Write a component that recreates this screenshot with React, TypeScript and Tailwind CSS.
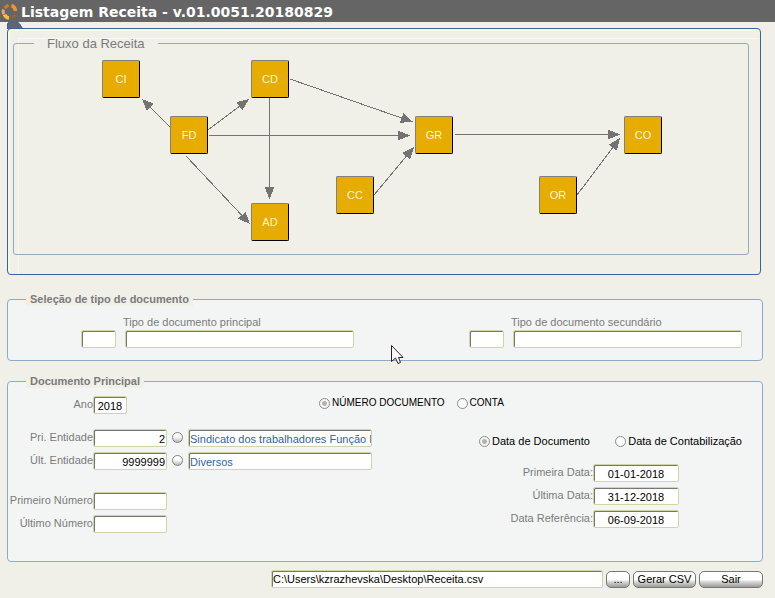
import React, { useState } from "react";

const fieldClass =
  "h-[18px] min-w-0 rounded-[2px] border border-[#d0d5a6] bg-white text-[11px] leading-[14px] shadow-[inset_1px_1px_0_#77776d] outline-none";

const nodes = [
  { id: "CI", place: "left-[88px] top-[8px]" },
  { id: "FD", place: "left-[156px] top-[64px]" },
  { id: "CD", place: "left-[237px] top-[8px]" },
  { id: "GR", place: "left-[401px] top-[64px]" },
  { id: "CO", place: "left-[610px] top-[64px]" },
  { id: "CC", place: "left-[322px] top-[124px]" },
  { id: "OR", place: "left-[525px] top-[124px]" },
  { id: "AD", place: "left-[237px] top-[151px]" },
];

const arrows = [
  [156, 75, 128, 47],
  [194, 78, 235, 47],
  [195, 83.5, 396, 83.5],
  [172, 104, 236, 172],
  [276, 27, 399, 70],
  [255.5, 46, 255.5, 147],
  [360, 143, 400, 95],
  [441, 82.5, 606, 82.5],
  [563, 143, 606, 86],
];

function Logo() {
  return (
    <svg width="17" height="18" viewBox="0 0 17 18" className="shrink-0" fill="none" strokeWidth="3" aria-hidden="true">
      <path d="M10.500 3.500 Q14 4.500 14.500 9" stroke="#f0932b" strokeWidth="3.600" />
      <path d="M3.500 6 L7.500 3" stroke="#d07a30" />
      <path d="M2.500 7.500 Q1.500 10 3 12" stroke="#e8a869" />
      <path d="M3.500 12.500 Q4.500 15.500 8 16" stroke="#ffbe3d" strokeWidth="3.600" />
      <path d="M11 15.500 L14.500 13" stroke="#a8622c" strokeWidth="2" />
    </svg>
  );
}

function FlowDiagram() {
  return (
    <div className="relative h-[202px]">
      <svg className="absolute left-0 top-0" width="734" height="202" viewBox="0 0 734 202" shapeRendering="crispEdges" aria-hidden="true">
        <defs>
          <marker id="head" markerUnits="userSpaceOnUse" markerWidth="13" markerHeight="12" refX="12" refY="5" orient="auto">
            <path d="M0 0 L12 5 L0 10 Z" fill="#737373" />
          </marker>
        </defs>
        {arrows.map(([x1, y1, x2, y2]) => (
          <line key={`${x1}-${y1}-${x2}`} x1={x1} y1={y1} x2={x2} y2={y2} stroke="#737373" strokeWidth="1" markerEnd="url(#head)" />
        ))}
      </svg>
      {nodes.map((node) => (
        <button
          key={node.id}
          type="button"
          className={`absolute size-[38px] rounded-[2px] border border-b-black border-l-[#808080] border-r-black border-t-[#808080] bg-[#e6ac00] text-[11px] text-[#fff4dc] ${node.place}`}
        >
          {node.id}
        </button>
      ))}
    </div>
  );
}

function Radio(props: { name: string; label: string; checked: boolean; onSelect: () => void; size: string }) {
  return (
    <label className={`flex items-center gap-0.5 leading-3 text-black ${props.size}`}>
      <input
        type="radio"
        name={props.name}
        checked={props.checked}
        onChange={props.onSelect}
        className="mt-0.5 size-[11px] shrink-0 appearance-none rounded-full border border-[#8a8a8a] bg-white checked:bg-[radial-gradient(circle,#b4b4ac_0_2px,#f6f6f4_3px)]"
      />
      <span className="whitespace-nowrap">{props.label}</span>
    </label>
  );
}

function DocumentType(props: { id: string; label: string }) {
  return (
    <div className="flex flex-1 flex-col">
      <label htmlFor={props.id} className="pl-[42px] text-[11px] leading-4">
        {props.label}
      </label>
      <div className="flex gap-[9px]">
        <input aria-label={`${props.label} (código)`} className={`${fieldClass} w-[35px]`} />
        <input id={props.id} className={`${fieldClass} flex-1`} />
      </div>
    </div>
  );
}

function NumberRow(props: { id: string; label: string; value?: string; description?: string }) {
  return (
    <div className="flex items-start">
      <label htmlFor={props.id} className="w-[85px] shrink-0 text-right text-[11px] leading-[17px]">
        {props.label}
      </label>
      <input id={props.id} defaultValue={props.value} className={`${fieldClass} w-[74px] px-px pt-0.5 text-right text-black`} />
      {props.description && (
        <>
          <button
            type="button"
            aria-label={`Procurar ${props.label}`}
            className="mx-[5px] mt-[3px] size-[11px] shrink-0 rounded-full border border-[#808080] bg-linear-to-b from-white from-40% to-[#b9b9b9]"
          />
          <input
            aria-label={`Nome ${props.label}`}
            readOnly
            defaultValue={props.description}
            className={`${fieldClass} flex-1 pl-px pt-0.5 text-[#31659c]`}
          />
        </>
      )}
    </div>
  );
}

function DateRow(props: { id: string; label: string; value: string }) {
  return (
    <div className="flex items-start">
      <label htmlFor={props.id} className="w-[114px] shrink-0 text-right text-[11px] leading-[17px]">
        {props.label}
      </label>
      <input id={props.id} defaultValue={props.value} className={`${fieldClass} w-[86px] pt-0.5 text-center text-black`} />
    </div>
  );
}

const actionClass =
  "h-[17px] shrink-0 rounded-[5px] border border-[#777777] bg-[linear-gradient(#ffffff_0_50%,#d8d8d4_65%,#9c9c9c)] text-[11px] leading-[15px] text-black";

export default function App() {
  const [mode, setMode] = useState("numero");
  const [dateMode, setDateMode] = useState("documento");

  return (
    <div className="relative min-h-screen bg-[#f0efe8] font-['Liberation_Sans',Arial,sans-serif] text-[#7a7b7d]">
      <header className="flex h-[22px] items-center gap-[3px] bg-[#656565] pl-px">
        <Logo />
        <h1 className="pt-0.5 font-['DejaVu_Sans',Verdana,sans-serif] text-sm font-bold leading-none text-white">
          Listagem Receita - v.01.0051.20180829
        </h1>
      </header>

      <main className="pb-2 pl-[7px] pr-3 pt-1.5">
        <section className="relative mr-0.5 rounded-[4px] border border-[#31659c] pb-[19px] pl-[5px] pr-[11px] pt-1.5 shadow-[inset_1px_1px_0_1px_#f8f7e2]">
          <svg className="absolute -left-px -top-[7px]" width="17" height="7" viewBox="0 0 17 7" aria-hidden="true">
            <path d="M0.500 7 V2 Q0.500 0.500 3 0 H10 Q13 1 15 6 L16 6.500 Z" fill="#5f666d" stroke="#31659c" />
          </svg>
          <div className="absolute bottom-0 left-2.5 right-0.5 top-[9px] border-l border-t border-[#f6f7f7]" />
          <fieldset className="relative rounded-[3px] border border-[#94aac0]">
            <legend className="ml-5 px-[13px] text-[13px] leading-[17px]">Fluxo da Receita</legend>
            <FlowDiagram />
          </fieldset>
        </section>

        <fieldset className="mt-[17px] rounded-[4px] border border-[#8ca9c8] bg-[#f3f5f4] pb-3 pl-[73px] pr-5 pt-2">
          <legend className="-ml-[55px] bg-[#f0efe8] px-1 text-[11px] font-bold leading-[14px]">Seleção de tipo de documento</legend>
          <div className="flex gap-[115px]">
            <DocumentType id="principal" label="Tipo de documento principal" />
            <DocumentType id="secundario" label="Tipo de documento secundário" />
          </div>
        </fieldset>

        <fieldset className="mt-[13px] rounded-[4px] border border-[#8ca9c8] bg-[#f3f5f4] pb-7 pr-5 pt-2">
          <legend className="ml-[18px] bg-[#f0efe8] px-1 text-[11px] font-bold leading-[14px]">Documento Principal</legend>
          <div className="flex items-start">
            <label htmlFor="ano" className="w-[85px] text-right text-[11px] leading-[17px]">
              Ano
            </label>
            <input id="ano" defaultValue="2018" className={`${fieldClass} w-[34px] pt-0.5 text-center text-black`} />
            <div className="ml-48 flex gap-3">
              <Radio name="modo" label="NÚMERO DOCUMENTO" size="text-[10px]" checked={mode === "numero"} onSelect={() => setMode("numero")} />
              <Radio name="modo" label="CONTA" size="text-[10px]" checked={mode === "conta"} onSelect={() => setMode("conta")} />
            </div>
          </div>

          <div className="mt-[15px] flex gap-[107px]">
            <div className="flex min-w-0 flex-1 flex-col gap-[5px]">
              <NumberRow id="pri-entidade" label="Pri. Entidade" value="2" description="Sindicato dos trabalhadores Função Pública" />
              <NumberRow id="ult-entidade" label="Últ. Entidade" value="9999999" description="Diversos" />
              <div className="h-3" />
              <NumberRow id="primeiro-numero" label="Primeiro Número" />
              <NumberRow id="ultimo-numero" label="Último Número" />
            </div>
            <div className="w-[263px] shrink-0 pt-[5px]">
              <div className="flex justify-between">
                <Radio name="data" label="Data de Documento" size="text-[11px]" checked={dateMode === "documento"} onSelect={() => setDateMode("documento")} />
                <Radio name="data" label="Data de Contabilização" size="text-[11px]" checked={dateMode === "contabilizacao"} onSelect={() => setDateMode("contabilizacao")} />
              </div>
              <div className="mt-[17px] flex flex-col gap-[5px]">
                <DateRow id="primeira-data" label="Primeira Data:" value="01-01-2018" />
                <DateRow id="ultima-data" label="Última Data:" value="31-12-2018" />
                <DateRow id="data-referencia" label="Data Referência:" value="06-09-2018" />
              </div>
            </div>
          </div>
        </fieldset>

        <div className="mt-2 flex items-center gap-[3px] pl-[264px]">
          <input aria-label="Ficheiro de destino" defaultValue="C:\Users\kzrazhevska\Desktop\Receita.csv" className={`${fieldClass} flex-1 pl-px text-black`} />
          <button type="button" aria-label="Escolher ficheiro" className={`${actionClass} w-6`}>
            ...
          </button>
          <button type="button" className={`${actionClass} w-[63px]`}>
            Gerar CSV
          </button>
          <button type="button" className={`${actionClass} w-16`}>
            Sair
          </button>
        </div>
      </main>

      <svg className="pointer-events-none absolute left-[391px] top-[345px]" width="13" height="20" viewBox="0 0 13 20" aria-hidden="true">
        <path d="M0.500 0.500 V16.500 L4.500 13 L7 18.500 L9.500 17.500 L7.500 12.500 H12 Z" fill="#ffffff" stroke="#2b1f2b" />
      </svg>
    </div>
  );
}
